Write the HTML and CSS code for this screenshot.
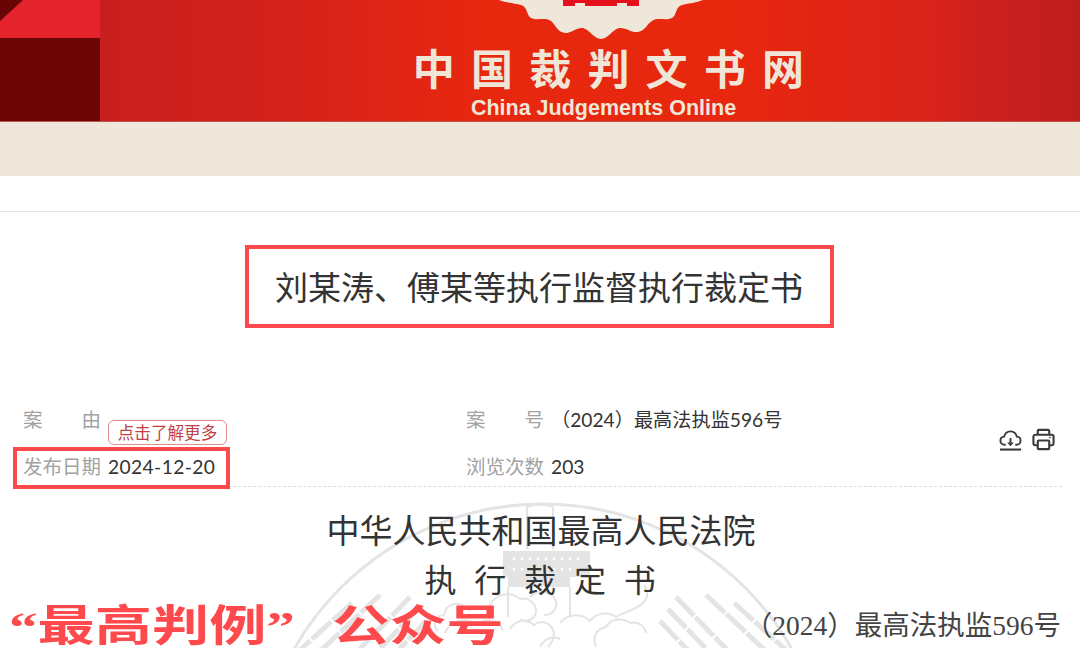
FILE: index.html
```html
<!DOCTYPE html>
<html lang="zh-CN">
<head>
<meta charset="utf-8">
<title>中国裁判文书网</title>
<link rel="stylesheet" href="styles.css">
</head>
<body>
<header class="banner">
  <div class="corner">
    <svg class="corner-tip" width="24" height="22" viewBox="0 0 24 22"><path d="M0 0H23L0 21Z" fill="#6a0505"/></svg>
  </div>
  <div class="brand">
    <svg class="gear" width="230" height="40" viewBox="0 0 230 40">
      <path d="M0 0 C8 3 16 3 22 5 C29 7 27 15 32 18 C38 21 46 17 52 21 C56 24 58 32 66 33 C73 33 78 27 84 28 C91 30 95 39 102 39 C109 39 113 30 120 28 C127 27 132 33 139 32 C146 31 148 24 153 21 C158 17 167 21 173 18 C178 15 176 7 183 5 C190 3 197 3 204 0Z" fill="#efe8da"/>
      <path d="M64 0V6H76V3H86V6H118V3H128V6H140V0Z" fill="#e60f1c"/>
    </svg>
    <div class="brand-cn">中国裁判文书网</div>
    <div class="brand-en">China Judgements Online</div>
  </div>
</header>
<div class="band"></div>
<div class="rule"></div>

<main class="page">
  <h1 class="title">刘某涛、傅某等执行监督执行裁定书</h1>

  <section class="meta">
    <div class="meta-cols">
      <div class="meta-item">
        <span class="label label-spread"><span>案</span><span>由</span></span>
        <a class="tag">点击了解更多</a>
      </div>
      <div class="meta-item">
        <span class="label label-spread"><span>案</span><span>号</span></span>
        <span class="value">（2024）最高法执监596号</span>
      </div>
      <div class="meta-item meta-date">
        <span class="label">发布日期</span>
        <span class="value value-date">2024-12-20</span>
      </div>
      <div class="meta-item">
        <span class="label">浏览次数</span>
        <span class="value">203</span>
      </div>
    </div>
    <div class="tools">
      <svg viewBox="0 0 24 24" fill="none" stroke="#3a3a3a" stroke-width="2">
        <path d="M7 17.500H6C3.300 17.500 1.500 15.600 1.500 13.200C1.500 10.900 3.200 9.100 5.400 9C6.200 5.600 8.800 3.500 12 3.500C15.200 3.500 17.800 5.600 18.600 9C20.800 9.100 22.500 10.900 22.500 13.200C22.500 15.600 20.700 17.500 18 17.500H17"/>
        <path d="M12 10.500V17"/>
        <path d="M8.500 15L12 19L15.500 15" fill="#3a3a3a" stroke="none"/>
        <path d="M1 22.500H23" stroke-width="2.200"/>
      </svg>
      <svg viewBox="0 0 24 24" fill="none" stroke="#3a3a3a" stroke-width="2.200">
        <path d="M6 7V3.500C6 2.600 6.600 2 7.500 2H16.500C17.400 2 18 2.600 18 3.500V7"/>
        <path d="M6 18H3.500C2.400 18 1.500 17.100 1.500 16V9C1.500 7.900 2.400 7 3.500 7H20.500C21.600 7 22.500 7.900 22.500 9V16C22.500 17.100 21.600 18 20.500 18H18"/>
        <rect x="6" y="13" width="12" height="9" rx="1"/>
        <path d="M18 10H19.500" stroke-width="1.500"/>
      </svg>
    </div>
  </section>

  <article class="doc">
    <svg class="emblem" width="1080" height="161" viewBox="0 0 1080 161" fill="none" stroke="#e4e4e4">
      <circle cx="543" cy="303" r="286" stroke-width="3"/>
      <g stroke-width="2">
        <path d="M527 62V20Q540 15 553 20V62"/>
        <path d="M508 100V130M570 100V130"/>
        <path d="M470 124c-10-12-24-8-26 4c-8 0-12 10-6 16"/>
        <path d="M445 146c6-14 22-16 32-8c8-8 22-6 26 6"/>
        <path d="M490 118c6-12 22-14 30-6c8-2 16 4 16 12c0 8-10 12-16 8"/>
        <path d="M530 110c8-8 22-6 26 4c2 8-4 14-12 14"/>
        <path d="M510 142c6-10 18-10 24-4c8-6 18-2 20 8c0 6-2 10-6 14"/>
        <path d="M560 136c8-10 22-10 30-2c6-8 18-10 26-4c10-6 24-8 30-18c2-4 2-10-2-14"/>
        <path d="M596 160c-4-10 0-18 10-20c4-8 16-10 24-4c8-2 14 2 16 10"/>
        <path d="M540 160c4-8 12-12 20-8"/>
      </g>
      <g stroke-width="5" stroke-dasharray="26 2">
        <path d="M676 110L732 168M668 122L716 172M660 134L696 172"/>
        <path d="M706 108L770 168M734 116L796 172"/>
        <path d="M410 110L354 168M418 122L370 172M426 134L390 172"/>
        <path d="M380 108L316 168M352 116L290 172"/>
      </g>
      <path d="M503 64H590V90H570V100H508V90H503Z" fill="#e4e4e4" stroke="none"/>
      <g fill="#fff" stroke="none">
        <circle cx="514" cy="72" r="1.500"/><circle cx="522" cy="72" r="1.500"/><circle cx="530" cy="72" r="1.500"/><circle cx="538" cy="72" r="1.500"/><circle cx="546" cy="72" r="1.500"/><circle cx="554" cy="72" r="1.500"/><circle cx="562" cy="72" r="1.500"/><circle cx="570" cy="72" r="1.500"/><circle cx="578" cy="72" r="1.500"/>
        <circle cx="514" cy="82" r="1.500"/><circle cx="522" cy="82" r="1.500"/><circle cx="530" cy="82" r="1.500"/><circle cx="554" cy="82" r="1.500"/><circle cx="562" cy="82" r="1.500"/><circle cx="570" cy="82" r="1.500"/><circle cx="578" cy="82" r="1.500"/>
      </g>
    </svg>
    <h2 class="court">中华人民共和国最高人民法院</h2>
    <h2 class="kind">执行裁定书</h2>
    <p class="docno">（2024）最高法执监596号</p>
    <div class="stamp"><span class="quote">“</span>最高判例<span class="quote">”</span><span class="stamp-gap">公众号</span></div>
  </article>
</main>
</body>
</html>
```

FILE: styles.css
```css
* { box-sizing: border-box; }
*::after { box-sizing: border-box; }
html, body { margin: 0; padding: 0; height: 649px; overflow: hidden; background: #fff; }
body { font-family: "Noto Sans CJK SC", "Liberation Sans", sans-serif; color: #333; }

.banner {
  position: relative;
  height: 122px;
  display: flex;
  overflow: hidden;
  border-bottom: 1px solid #c0504a;
  background: linear-gradient(90deg, #c81f1e 100px, #d4211b 280px, #e8270f 480px, #e8270f 740px, #d8221a 940px, #cb201f 990px, #c01d1f 1080px);
}
.corner {
  position: relative;
  width: 100px;
  flex: none;
  background: linear-gradient(#e3242c 0 38px, #6c0606 38px 100%);
}
.corner-tip { position: absolute; left: 0; top: 0; display: block; }
.brand {
  flex: 1;
  display: flex;
  flex-direction: column;
  align-items: center;
  position: relative;
  padding: 42px 0 0 20px;
  color: #efe6d8;
}
.gear { position: absolute; left: 399px; top: 0; }
.brand-cn {
  font-size: 42px;
  line-height: 50px;
  font-weight: 700;
  letter-spacing: 16.200px;
  margin-left: 17px;
  margin-right: -16px;
  white-space: nowrap;
}
.brand-en {
  font-family: "Liberation Sans", sans-serif;
  font-size: 21.500px;
  line-height: 24px;
  font-weight: 700;
  margin-top: 4px;
  margin-left: 7px;
}

.band { height: 54px; background: #efe8da; }
.rule { height: 36px; border-bottom: 1px solid #e2e2e2; }

.page { display: flex; flex-direction: column; }
.title {
  align-self: center;
  width: 589px;
  height: 83px;
  margin: 33px 0 0 -2px;
  border: 4px solid #ff4a4d;
  font-size: 33px;
  font-weight: 400;
  line-height: 74px;
  text-align: center;
  color: #333;
  white-space: nowrap;
}

.meta {
  display: flex;
  justify-content: space-between;
  align-items: center;
  margin: 69px 18px 0 13px;
  height: 90px;
  border-bottom: 1px dashed #dcdcdc;
}
.meta-cols {
  display: grid;
  grid-template-columns: 443px 1fr;
  grid-auto-rows: 47px;
  flex: 1;
  padding: 0 0 0 10px;
}
.meta-item {
  position: relative;
  display: flex;
  align-items: center;
  font-size: 19.500px;
  gap: 7px;
  white-space: nowrap;
}
.meta-item:nth-child(3), .meta-item:nth-child(4) { padding-top: 1px; }
.label { color: #a2a2a2; width: 78px; flex: none; }
.label-spread { display: flex; justify-content: space-between; }
.value { color: #333; font-family: "Lato", "Noto Sans CJK SC", sans-serif; font-size: 19.200px; margin-top: 2px; }
.value-date { letter-spacing: 0.400px; }
.tag {
  position: absolute;
  left: 85px;
  top: 25px;
  width: 119px;
  height: 25px;
  border: 1px solid #e28c8c;
  border-radius: 6px;
  color: #c23f48;
  font-size: 16.600px;
  line-height: 23px;
  text-align: center;
  background: #fff;
}
.meta-date::after {
  content: "";
  position: absolute;
  left: -10px;
  top: 5px;
  width: 217px;
  height: 42px;
  border: 4px solid #ff4a4d;
}
.tools { display: flex; gap: 10px; align-items: center; margin-right: 7px; margin-top: -4px; }
.tools svg { display: block; width: 23px; height: 23px; }

.doc { position: relative; height: 161px; text-align: center; color: #333; }
.emblem { position: absolute; left: 0; top: 0; }
.court, .kind { position: relative; margin: 0; font-weight: 400; }
.court { font-size: 33px; height: 68px; padding-top: 18px; line-height: 48px; margin-left: 2px; }
.kind { font-size: 32px; line-height: 48px; letter-spacing: 17.800px; margin-left: 18px; margin-top: -1px; }
.docno {
  position: absolute;
  right: 19px;
  top: 119px;
  margin: 0;
  font-family: "Liberation Serif", "Noto Sans CJK SC", serif;
  font-size: 27.500px;
  line-height: 40px;
  color: #444;
  white-space: nowrap;
}
.stamp {
  position: absolute;
  left: 9px;
  top: 113px;
  font-family: "Noto Sans CJK SC", sans-serif;
  font-size: 43px;
  line-height: 44px;
  font-weight: 700;
  color: #ff4a4d;
  white-space: nowrap;
  transform: scaleX(1.330);
  transform-origin: left center;
  text-align: left;
}
.quote { font-family: "Liberation Serif", serif; }
.stamp-gap { margin-left: 28px; }
```
